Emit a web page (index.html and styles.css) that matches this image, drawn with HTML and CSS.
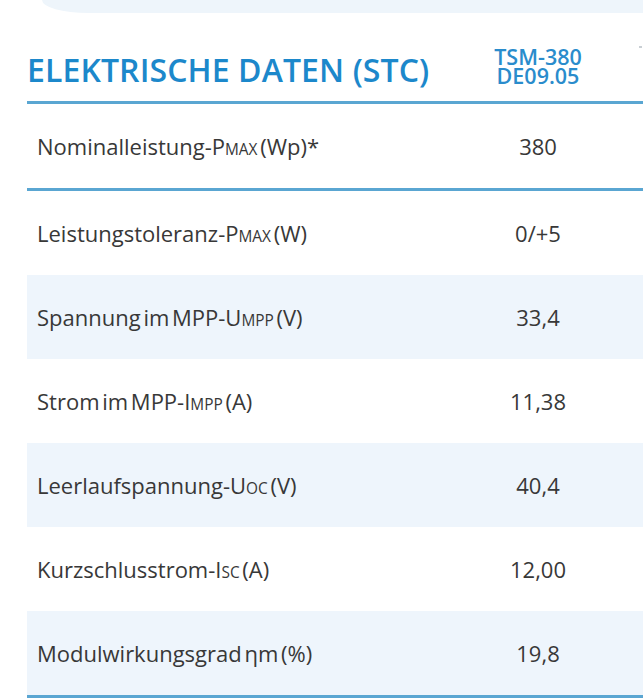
FILE: index.html
```html
<!DOCTYPE html>
<html lang="de">
<head>
<meta charset="utf-8">
<title>Elektrische Daten (STC)</title>
<link rel="stylesheet" href="styles.css">
</head>
<body>
<div class="page">
  <div class="top-tab"></div>
  <div class="sheet">
    <div class="head">
      <h2 class="title">ELEKTRISCHE DATEN (STC)</h2>
      <div class="model">
        <div class="model-line">TSM-380</div>
        <div class="model-line">DE09.05</div>
      </div>
      <div class="model-next"></div>
    </div>
    <div class="rule"></div>
    <div class="row">
      <div class="label">Nominalleistung-P<span class="sc">MAX</span> (Wp)*</div>
      <div class="val">380</div>
    </div>
    <div class="rule"></div>
    <div class="row">
      <div class="label">Leistungstoleranz-P<span class="sc">MAX</span> (W)</div>
      <div class="val">0/+5</div>
    </div>
    <div class="row shade">
      <div class="label">Spannung im MPP-U<span class="sc">MPP</span> (V)</div>
      <div class="val">33,4</div>
    </div>
    <div class="row">
      <div class="label">Strom im MPP-I<span class="sc">MPP</span> (A)</div>
      <div class="val">11,38</div>
    </div>
    <div class="row shade">
      <div class="label">Leerlaufspannung-U<span class="sc">OC</span> (V)</div>
      <div class="val">40,4</div>
    </div>
    <div class="row">
      <div class="label">Kurzschlusstrom-I<span class="sc">SC</span> (A)</div>
      <div class="val">12,00</div>
    </div>
    <div class="row shade">
      <div class="label">Modulwirkungsgrad ηm (%)</div>
      <div class="val">19,8</div>
    </div>
    <div class="rule"></div>
  </div>
</div>
</body>
</html>
```

FILE: styles.css
```css
html, body {
  margin: 0;
  padding: 0;
  background: #ffffff;
  overflow: hidden;
}

.page {
  width: 643px;
  height: 700px;
  overflow: hidden;
  font-family: "Open Sans", "Liberation Sans", sans-serif;
}

.top-tab {
  height: 13px;
  margin-left: 42px;
  width: 700px;
  background: #eef5fb;
  border-bottom-left-radius: 46px 13px;
}

.sheet {
  margin-left: 27px;
  width: 720px;
}

.head {
  display: flex;
  align-items: flex-end;
  height: 73px;
  padding-bottom: 15px;
}

.title {
  margin: 0;
  width: 446px;
  font-size: 32px;
  line-height: 32px;
  font-weight: 600;
  color: #1c88cb;
  letter-spacing: 0.1px;
}

.model {
  width: 130px;
  text-align: center;
  font-size: 21.5px;
  line-height: 19px;
  font-weight: 600;
  color: #2a8ccc;
  margin-bottom: 1px;
}

.model-line {
  height: 19px;
}

.model-next {
  align-self: flex-start;
  margin-top: 33px;
  margin-left: 36px;
  width: 3px;
  height: 2px;
  background: #c9cfd4;
}

.rule {
  height: 3px;
  background: #5aa6d2;
}

.row {
  display: grid;
  grid-template-columns: 446px 130px 1fr;
  align-items: center;
  height: 84px;
  color: #383838;
  font-size: 22px;
}

.row.shade {
  background: #eef5fc;
}

.label {
  padding-left: 10px;
  white-space: nowrap;
  word-spacing: -3px;
}

.sc {
  font-size: 0.7em;
}

.val {
  text-align: center;
}
```
